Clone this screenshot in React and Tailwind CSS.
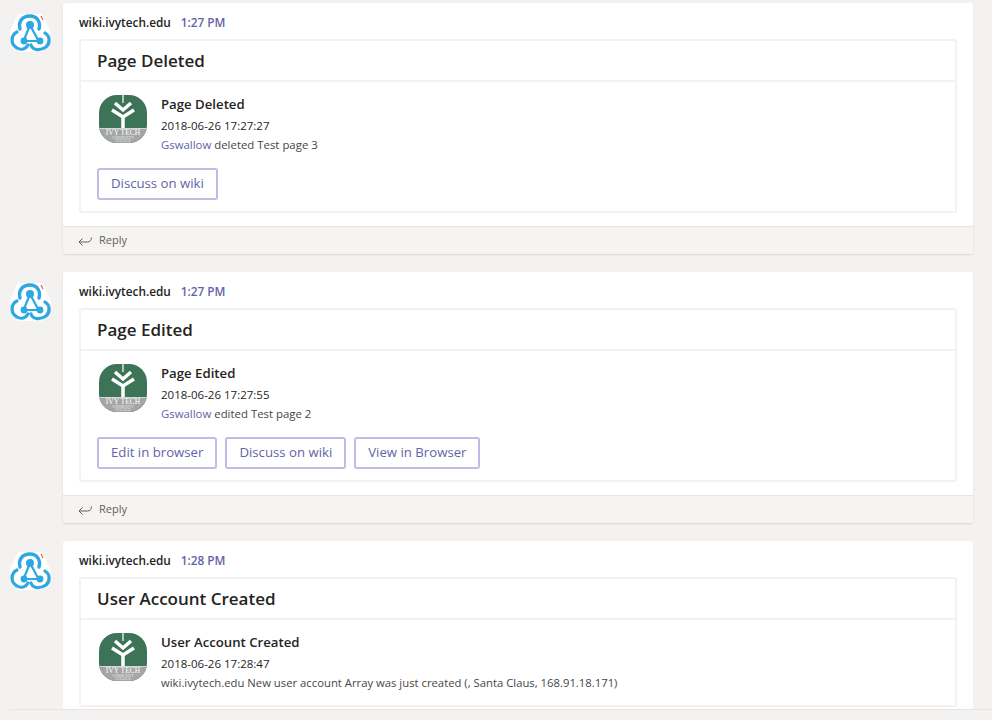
const font = { fontFamily: '"Open Sans", "Noto Sans", sans-serif' };
const serif = { fontFamily: '"Liberation Serif", serif' };

const WebhookLogo = () => (
  <svg width="42" height="38" viewBox="0 0 42 38" fill="none">
    <polygon points="9,0 33,0 42,19 33,38 9,38 0,19" fill="#fff" />
    <g stroke="#2ea8e0" strokeLinecap="round" strokeLinejoin="round" fill="none">
      <path d="M11 15 C9 8 13 2 21 2 C28 2 32 8 30 15" strokeWidth="3.4" />
      <path d="M21 11 L15 26" strokeWidth="2.2" />
      <path d="M21 11 L29 26" strokeWidth="2.2" />
      <path d="M15 27 H31" strokeWidth="2.2" />
      <path d="M8 18 C2 21 1 30 8 34 C12 36.5 17 35 19 31" strokeWidth="3.2" />
      <path d="M22 31 C24 36.5 31 37 37 33 C41.5 29 41 22 36 19" strokeWidth="3.2" />
    </g>
    <circle cx="21" cy="11" r="4" fill="#2ea8e0" />
    <circle cx="15" cy="27" r="3.4" fill="#2ea8e0" />
    <circle cx="31" cy="27" r="3.4" fill="#2ea8e0" />
    <path d="M32 2 L34 6" stroke="#e8604c" strokeWidth="1.3" />
  </svg>
);

const IvyTechLogo = () => (
  <div className="w-12 h-12 shrink-0 rounded-[18px] overflow-hidden bg-[#3d7357] flex flex-col">
    <svg width="48" height="33" viewBox="0 0 48 33" className="shrink-0">
      <path d="M24 0 V8" stroke="#d8e4dd" strokeWidth="1.5" />
      <path d="M24 20 V33" stroke="#fff" strokeWidth="3.5" />
      <path d="M16 8 L24 15 L32 8" stroke="#fff" strokeWidth="3.5" fill="none" />
      <path d="M13 15 L24 22 L35 15" stroke="#fff" strokeWidth="3.5" fill="none" />
    </svg>
    <div className="flex-1 bg-[#a4a6a6] border-t border-[#d5d8d6] flex flex-col items-center overflow-hidden">
      <span className="text-[7.5px] leading-[8px] text-white whitespace-nowrap" style={serif}>IVY TECH</span>
      <span className="text-[3.5px] leading-[3px] text-[#e5e5e5] whitespace-nowrap" style={serif}>COMMUNITY</span>
      <span className="text-[3.5px] leading-[3px] text-[#e5e5e5] whitespace-nowrap" style={serif}>COLLEGE</span>
    </div>
  </div>
);

const ReplyIcon = () => (
  <svg width="14" height="12" viewBox="0 0 14 12" fill="none" stroke="#605e5c" strokeWidth="1">
    <path d="M4.5 3.5 L1 7 L4.5 10.5" />
    <path d="M1 7 H9.5 C12 7 13.5 5 13.5 2.5" />
  </svg>
);

const messages = [
  {
    time: '1:27 PM',
    title: 'Page Deleted',
    stamp: '2018-06-26 17:27:27',
    user: 'Gswallow',
    text: ' deleted Test page 3',
    buttons: ['Discuss on wiki'],
    reply: true,
  },
  {
    time: '1:27 PM',
    title: 'Page Edited',
    stamp: '2018-06-26 17:27:55',
    user: 'Gswallow',
    text: ' edited Test page 2',
    buttons: ['Edit in browser', 'Discuss on wiki', 'View in Browser'],
    reply: true,
  },
  {
    time: '1:28 PM',
    title: 'User Account Created',
    stamp: '2018-06-26 17:28:47',
    text: 'wiki.ivytech.edu New user account Array was just created (, Santa Claus, 168.91.18.171)',
    buttons: [],
    reply: false,
  },
];

const Message = ({ msg }) => {
  return (
    <div className="flex shrink-0">
      <div className="w-[63px] shrink-0 pl-[9px] pt-[11px]">
        <WebhookLogo />
      </div>
      <div className={msg.reply ? 'w-[910px] bg-white rounded-[3px] shadow-[0_1px_2px_rgba(0,0,0,0.12)]' : 'w-[910px] bg-white rounded-t-[3px]'}>
        <div className={msg.reply ? 'px-4 pt-[10px] pb-[13px]' : 'px-4 pt-[10px] pb-[2px]'}>
          <div className="flex items-center gap-[10px] h-[20px] mb-[6px]">
            <span className="text-[11.8px] font-semibold text-[#252423]">wiki.ivytech.edu</span>
            <span className="text-[11.8px] font-semibold text-[#6264a7]">{msg.time}</span>
          </div>
          <div className="border-2 border-[#f3f2f1] rounded-[3px]">
            <div className="h-[41px] flex items-center px-4 border-b-2 border-[#f3f2f1] text-[17px] font-semibold text-[#252423]">
              {msg.title}
            </div>
            <div className={msg.reply ? 'px-4 pt-[13px] pb-[11px]' : 'px-4 pt-[13px] pb-[24px]'}>
              <div className="flex gap-[14px] h-[48px] pl-[2px]">
                <IvyTechLogo />
                <div className="flex flex-col whitespace-nowrap">
                  <div className="text-[13.2px] leading-[18px] font-semibold text-[#252423]">{msg.title}</div>
                  <div className="text-[11.5px] leading-[18px] mt-[4px] text-[#252423]">{msg.stamp}</div>
                  <div className={msg.user ? 'text-[11.4px] leading-[16px] mt-[2px] text-[#484644]' : 'text-[11.3px] leading-[16px] mt-[2px] text-[#484644]'}>
                    {msg.user && <span className="text-[#6264a7]">{msg.user}</span>}
                    {msg.text}
                  </div>
                </div>
              </div>
              {msg.buttons.length > 0 && (
                <div className="flex gap-[8px] mt-[25px]">
                  {msg.buttons.map((b) => (
                    <button key={b} className="h-[32px] px-3 border-2 border-[#bdbde6] rounded-[3px] bg-white text-[13.2px] text-[#6264a7]">
                      {b}
                    </button>
                  ))}
                </div>
              )}
            </div>
          </div>
        </div>
        {msg.reply && (
          <div className="h-[28px] bg-[#f5f4f2] border-t border-[#e8e6e4] flex items-center pl-[15px] gap-[7px] text-[11px] text-[#605e5c] rounded-b-[3px]">
            <ReplyIcon />
            <span>Reply</span>
          </div>
        )}
      </div>
    </div>
  );
};

export default function App() {
  return (
    <div className="w-[992px] h-[720px] bg-[#f3f2f1] overflow-hidden" style={font}>
      <div className="h-[710px] overflow-hidden border-b border-[#e8e6e4] ml-[10px]">
        <div className="-ml-[10px] pt-[3px] flex flex-col gap-[18px]">
          {messages.map((m, i) => (
            <Message key={i} msg={m} />
          ))}
        </div>
      </div>
    </div>
  );
}
